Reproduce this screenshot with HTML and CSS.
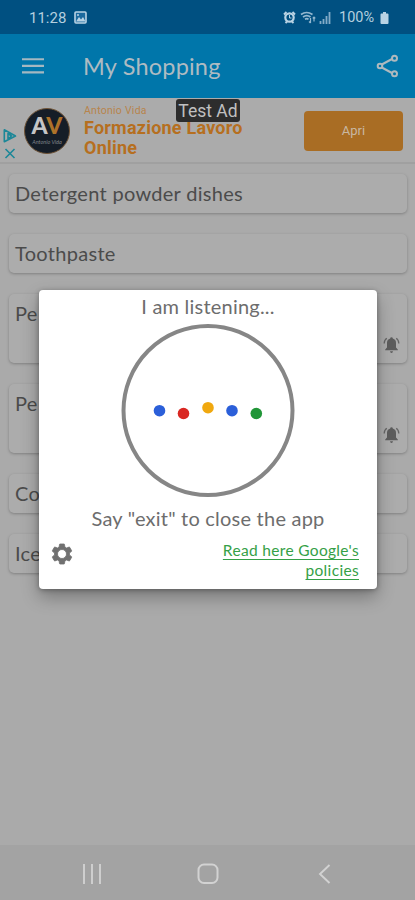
FILE: index.html
```html
<!DOCTYPE html>
<html lang="en">
<head>
<meta charset="utf-8">
<title>My Shopping</title>
<link rel="stylesheet" href="styles.css">
</head>
<body>
<div class="screen">
  <header class="status">
    <span class="time">11:28</span>
    <svg class="photo" width="13" height="13" viewBox="0 0 13 13"><rect x="1" y="1" width="11" height="11" rx="1" fill="#1c6a9e" stroke="#b9d3e4" stroke-width="1.6"/><path d="M2 10.5 5 6l2 2.5L9 6l2.500 4.500z" fill="#b9d3e4"/><circle cx="4" cy="4" r="1" fill="#b9d3e4"/></svg>
    <svg class="alarm" width="13" height="13" viewBox="0 0 13 13" fill="none" stroke="#b9d3e4"><circle cx="6.500" cy="6.500" r="4.200" stroke-width="2.200"/><path d="M1 3.500 3.500 1M12 3.500 9.500 1M2.500 12 4 10.500M10.500 12 9 10.500" stroke-width="1.900"/><path d="M6.500 4v3h2" stroke-width="1"/></svg>
    <svg class="wifi" width="16" height="13" viewBox="0 0 16 13" fill="none" stroke="#94b8d0" stroke-width="1.700"><path d="M1 3.500q5.500-4 11.500 0M3 6q3.800-2.700 7.500 0M5 8.300q2-1.200 3.500 0"/><path d="M10.500 7v5M9 10.500l1.500 1.500M14 10.500V6M12.700 7.300 14 6l1.300 1.300" stroke-width="1.200"/></svg>
    <svg class="signal" width="12" height="12" viewBox="0 0 12 12" stroke="#83acc8" stroke-width="1.800"><path d="M1.500 12V9M4.500 12V7M7.500 12V4M10.500 12V0"/></svg>
    <span class="percent">100%</span>
    <svg class="battery" width="9" height="12" viewBox="0 0 9 12" fill="#b9d3e4"><path d="M3 0h3v1.500h1.500q1 0 1 1V11q0 1-1 1h-6q-1 0-1-1V2.500q0-1 1-1H3z"/></svg>
  </header>
  <div class="appbar">
    <svg width="24" height="18" viewBox="0 0 24 18" stroke="#a4b8c1" stroke-width="2.100"><path d="M1 2.300h22M1 8.900h22M1 15.400h22"/></svg>
    <h1>My Shopping</h1>
    <svg class="share" width="24" height="26" viewBox="0 0 24 26" fill="none" stroke="#aeb9be" stroke-width="2"><path d="M5.800 11.500 16 6M5.800 14.500 16 20"/><circle cx="4" cy="13" r="2.300"/><circle cx="18.500" cy="5.200" r="2.500"/><circle cx="18.500" cy="20.800" r="2.500"/></svg>
  </div>
  <section class="ad">
    <div class="choices">
      <svg width="14" height="32" viewBox="0 0 14 32" fill="none" stroke="#1c8798" stroke-width="1.600"><path d="M1.300 1.800v12L12.500 8zM5 5.500v5.500L8.500 8z" stroke-linejoin="round"/><path d="m2.500 21 9 9m0-9-9 9"/></svg>
    </div>
    <div class="logo"><div class="letters">A<span>V</span></div><div class="sign">Antonio Vida</div></div>
    <div class="copy"><div class="brand">Antonio Vida</div><div class="headline">Formazione Lavoro<br>Online</div></div>
    <div class="cta">Apri</div>
    <div class="badge">Test Ad</div>
  </section>
  <main class="list">
    <div class="card">Detergent powder dishes</div>
    <div class="card">Toothpaste</div>
    <div class="card tall">Pe<svg class="bell" width="17" height="18" viewBox="0 0 17 18"><path d="M8.500 1.200q1.300 0 1.300 1.400 3.200 1 3.200 4.400v4.500l1.800 2v.8H2.200v-.8l1.800-2V7q0-3.400 3.200-4.400 0-1.400 1.300-1.400M7 15.300h3q-.2 1.700-1.500 1.700T7 15.300" fill="#5d5d5d"/><path d="M1.200 7.500q0-3.400 2.600-5.200M15.800 7.500q0-3.400-2.600-5.200" fill="none" stroke="#666" stroke-width="1.300"/></svg></div>
    <div class="card tall">Pe<svg class="bell" width="17" height="18" viewBox="0 0 17 18"><path d="M8.500 1.200q1.300 0 1.300 1.400 3.200 1 3.200 4.400v4.500l1.800 2v.8H2.200v-.8l1.800-2V7q0-3.400 3.200-4.400 0-1.400 1.300-1.400M7 15.300h3q-.2 1.700-1.500 1.700T7 15.300" fill="#5d5d5d"/><path d="M1.200 7.500q0-3.400 2.600-5.200M15.800 7.500q0-3.400-2.600-5.200" fill="none" stroke="#666" stroke-width="1.300"/></svg></div>
    <div class="card">Co</div>
    <div class="card">Ice</div>
  </main>
  <nav class="nav">
    <svg width="20" height="20" viewBox="0 0 20 20" stroke="#cecece" stroke-width="2"><path d="M2 0v20M10 0v20M18 0v20"/></svg>
    <svg width="22" height="22" viewBox="0 0 22 22" fill="none" stroke="#d2d2d2" stroke-width="2"><rect x="1.500" y="1.500" width="19" height="18.500" rx="5.500"/></svg>
    <svg width="20" height="20" viewBox="0 0 20 20" fill="none" stroke="#d2d2d2" stroke-width="1.900"><path d="M15.500 1 6 10l9.500 9"/></svg>
  </nav>
  <div class="dialog">
    <p class="listening">I am listening...</p>
    <svg class="ring" width="174" height="174" viewBox="0 0 174 174"><circle cx="87" cy="87.500" r="84.500" fill="none" stroke="#868686" stroke-width="4"/><circle cx="38.500" cy="87.700" r="5.800" fill="#2b5fd9"/><circle cx="62.500" cy="90.500" r="5.800" fill="#d92722"/><circle cx="87" cy="84.700" r="5.800" fill="#f0a80f"/><circle cx="111" cy="87.700" r="5.800" fill="#2b5fd9"/><circle cx="135.300" cy="90.500" r="5.800" fill="#219638"/></svg>
    <p class="hint">Say "exit" to close the app</p>
    <div class="foot">
      <svg width="24" height="24" viewBox="0 0 24 24" fill="#707070" stroke="#707070" stroke-width=".8"><path d="M19.430 12.980c.04-.32.070-.64.070-.98s-.03-.66-.07-.98l2.110-1.650c.19-.15.240-.42.120-.64l-2-3.460c-.12-.22-.39-.3-.61-.22l-2.490 1c-.52-.4-1.080-.73-1.690-.98l-.38-2.650A.49.490 0 0 0 14 2h-4c-.25 0-.46.180-.49.420l-.38 2.650c-.61.250-1.170.590-1.690.98l-2.490-1c-.23-.09-.49 0-.61.220l-2 3.460c-.13.220-.07.490.120.640l2.110 1.650c-.04.320-.07.650-.07.980s.03.660.070.980l-2.110 1.650c-.19.150-.24.420-.12.640l2 3.460c.12.220.390.300.610.220l2.490-1c.52.400 1.080.730 1.690.980l.38 2.650c.03.240.240.420.490.420h4c.25 0 .46-.18.490-.42l.38-2.650c.61-.25 1.170-.59 1.690-.98l2.490 1c.23.090.490 0 .61-.22l2-3.460c.12-.22.070-.49-.12-.64zM12 16.500a4.500 4.500 0 1 1 0-9 4.500 4.500 0 0 1 0 9z"/></svg>
      <a class="link">Read here Google's<br>policies</a>
    </div>
  </div>
</div>
</body>
</html>
```
FILE: styles.css
```css
* { box-sizing: border-box; }
body { margin: 0; font-family: Lato, sans-serif; }
svg { display: block; flex: none; }
p, h1 { margin: 0; font-weight: 400; }
.screen { width: 415px; height: 900px; background: #aaa; position: relative; overflow: hidden; display: flex; flex-direction: column; }
.status { height: 34px; background: #005081; display: flex; align-items: center; padding: 1px 26px 0 29px; color: #b4cfdf; font: 14.500px Roboto, sans-serif; flex: none; }
.time { width: 45px; font-size: 15px; }
.alarm { margin-left: auto; }
.wifi { margin-left: 4px; }
.signal { margin-left: 3px; }
.percent { margin-left: 8px; width: 36px; }
.battery { margin-left: 5px; }
.appbar { height: 64px; background: #0076aa; display: flex; align-items: center; padding: 0 15px 0 21px; flex: none; }
.appbar h1 { margin-left: 38px; color: #aebbc2; font-size: 23.500px; letter-spacing: .2px; }
.share { margin-left: auto; }
.ad { height: 66px; flex: none; position: relative; display: flex; background: #ababab; border-bottom: 2px solid #a0a0a0; padding: 0 12px 0 3px; }
.choices { width: 14px; padding-top: 30px; }
.logo { width: 46px; height: 46px; margin: 10px 0 0 7px; border-radius: 50%; background: #151d27; border: 1px solid #705437; text-align: center; color: #c5c5c5; flex: none; }
.letters { font: 900 23px/24px Lato, sans-serif; margin-top: 4px; }
.letters span { color: #ad7229; }
.sign { font: italic 5.500px/6px Lato, sans-serif; margin-top: 2px; color: #81868b; }
.copy { width: 160px; margin-left: 14px; color: #b66f1f; }
.brand { font: 10.500px/13px Roboto, sans-serif; letter-spacing: .25px; margin-top: 6px; color: #b8844b; }
.headline { font: 700 18px/20px Roboto, sans-serif; letter-spacing: .22px; margin-top: 1px; white-space: nowrap; }
.cta { margin: 13px 0 0 auto; width: 99px; height: 40px; border-radius: 4px; background: #a96d24; color: #c8b7a2; font: 13px/40px Roboto, sans-serif; text-align: center; }
.badge { position: absolute; left: 176px; top: 1px; width: 64px; height: 23px; border-radius: 3px; background: #2d2d2d; color: #c0c0c0; font: 17.500px/24px Roboto, sans-serif; text-align: center; white-space: nowrap; }
.list { flex: 1; padding: 10px 8px 0 9px; display: flex; flex-direction: column; gap: 21px; }
.card { height: 39px; flex: none; border-radius: 5px; background: #acacac; box-shadow: 0 1px 3px rgba(0,0,0,.25); color: #4b4b4b; font-size: 20px; letter-spacing: .3px; line-height: 38px; padding-left: 6px; position: relative; }
.tall { height: 69px; line-height: 39px; }
.bell { position: absolute; right: 7px; bottom: 9px; }
.nav { height: 55px; flex: none; background: #a3a3a3; display: flex; justify-content: space-between; align-items: center; padding: 2px 81px 0 82px; }
.dialog { position: absolute; left: 39px; top: 290px; width: 338px; height: 299px; background: #fff; border-radius: 4px; box-shadow: 0 8px 18px rgba(0,0,0,.3), 0 1px 5px rgba(0,0,0,.3); display: flex; flex-direction: column; align-items: center; color: #6d6d6d; font-size: 20px; letter-spacing: .22px; }
.listening { height: 33px; line-height: 33px; }
.ring { margin-right: 1px; }
.hint { line-height: 30px; margin-top: 6px; }
.foot { width: 100%; display: flex; justify-content: space-between; padding: 8px 18px 0 11px; }
.foot svg { margin-top: 1px; }
.link { color: #35a047; font-size: 15.500px; letter-spacing: .33px; line-height: 19.500px; text-align: right; text-decoration: underline; text-underline-offset: 3px; text-decoration-skip-ink: none; }
```
